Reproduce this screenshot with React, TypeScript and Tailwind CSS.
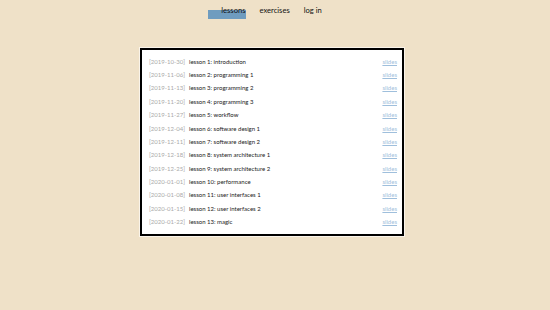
const lessons = [
  ['2019-10-30', 'lesson 1: introduction'],
  ['2019-11-06', 'lesson 2: programming 1'],
  ['2019-11-13', 'lesson 3: programming 2'],
  ['2019-11-20', 'lesson 4: programming 3'],
  ['2019-11-27', 'lesson 5: workflow'],
  ['2019-12-04', 'lesson 6: software design 1'],
  ['2019-12-11', 'lesson 7: software design 2'],
  ['2019-12-18', 'lesson 8: system architecture 1'],
  ['2019-12-25', 'lesson 9: system architecture 2'],
  ['2020-01-01', 'lesson 10: performance'],
  ['2020-01-08', 'lesson 11: user interfaces 1'],
  ['2020-01-15', 'lesson 12: user interfaces 2'],
  ['2020-01-22', 'lesson 13: magic'],
];

export default function App() {
  return (
    <div className="min-h-[310px] w-full bg-[#efe1c8] pt-[1px] font-['Lato','Liberation_Sans',sans-serif]">
      <nav className="flex justify-center gap-[14px] pr-[20px] pt-[4px] text-[7.6px] text-[#111]">
        <span className="relative pl-[13px]">
          <span className="absolute left-0 top-[5px] h-[9px] w-[38px] bg-[#6f9cbf]" />
          <span className="relative">lessons</span>
        </span>
        <span>exercises</span>
        <span>log in</span>
      </nav>

      <div className="mx-auto mt-[32px] w-[264px] -translate-x-[3px] border-2 border-black bg-white pb-[6px] pl-[7px] pr-[5px] pt-[4px] shadow-[0_0_0_1px_#faf4ea]">
        {lessons.map(([date, title]) => (
          <div key={date} className="flex h-[13.4px] items-center text-[6px]">
            <span className="w-[40px] text-[#aaaaaa]">[{date}]</span>
            <span className="flex-1 text-[#1a1a1a]">{title}</span>
            <a className="text-[#9fbfdc] underline">slides</a>
          </div>
        ))}
      </div>
    </div>
  );
}
